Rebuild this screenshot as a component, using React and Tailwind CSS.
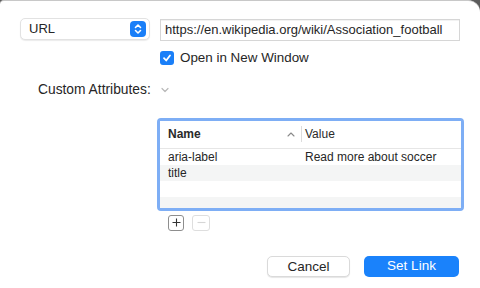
import React from "react";

function Stepper() {
  return (
    <span className="flex h-[16px] w-[16px] items-center justify-center rounded-[4px] bg-[#1a7ff8]">
      <svg width="8" height="12" viewBox="0 0 8 12" fill="none" stroke="white" strokeWidth="1.6" strokeLinecap="round" strokeLinejoin="round">
        <path d="M1.5 4.5 L4 2 L6.5 4.5" />
        <path d="M1.5 7.5 L4 10 L6.5 7.5" />
      </svg>
    </span>
  );
}

export default function App() {
  const rows = [
    { name: "aria-label", value: "Read more about soccer", bg: "bg-white" },
    { name: "title", value: "", bg: "bg-[#f4f5f5]" },
    { name: "", value: "", bg: "bg-white" },
    { name: "", value: "", bg: "bg-[#f4f5f5]" },
  ];

  return (
    <div
      className="h-[288px] w-[480px] overflow-hidden bg-[#5c5c5c] text-[13px] text-[#262626]"
      style={{ fontFamily: '"Liberation Sans", Arial, sans-serif' }}
    >
      <div className="h-full rounded-tl-[4px] rounded-tr-[12px] border-t border-[#c8c8c8] bg-white">
        {/* URL row */}
        <div className="flex items-center pl-[20px] pt-[16px]">
          <div className="flex h-[22px] w-[130px] items-center justify-between rounded-[5px] border border-[#e2e2e2] bg-white pl-[8px] pr-[3px] shadow-[0_1px_1px_rgba(0,0,0,0.08)]">
            <span>URL</span>
            <Stepper />
          </div>
          <div className="ml-[10px] mt-[2px] flex h-[22px] w-[300px] items-center border border-[#d6d6d6] bg-white pl-[4px] shadow-[inset_0_1px_0_rgba(0,0,0,0.05)]">
            <span className="whitespace-nowrap">https://en.wikipedia.org/wiki/Association_football</span>
          </div>
        </div>

        {/* checkbox */}
        <div className="mt-[7px] flex items-center pl-[160px]">
          <span className="flex h-[14px] w-[14px] items-center justify-center rounded-[3px] bg-[#1a7ff8]">
            <svg width="10" height="10" viewBox="0 0 10 10" fill="none" stroke="white" strokeWidth="1.8" strokeLinecap="round" strokeLinejoin="round">
              <path d="M2 5.2 L4.2 7.5 L8 2.5" />
            </svg>
          </span>
          <span className="ml-[6px] text-[13.4px]">Open in New Window</span>
        </div>

        {/* custom attributes */}
        <div className="mt-[12px] flex items-center">
          <span className="w-[151px] pl-[38px] text-[13.8px]">Custom Attributes:</span>
          <svg className="ml-[10px]" width="8" height="6" viewBox="0 0 8 6" fill="none" stroke="#b8b8b8" strokeWidth="1.2" strokeLinecap="round" strokeLinejoin="round">
            <path d="M1 1.5 L4 4.5 L7 1.5" />
          </svg>
        </div>

        {/* table */}
        <div className="ml-[157px] mt-[17px] w-[307px] rounded-[4px] border-[3px] border-[#7eaef5]">
          <div className="overflow-hidden bg-white">
            <div className="flex h-[28px] items-center border-b border-[#e6e6e6] text-[12px] font-bold text-[#2a2a2a]">
              <span className="flex-1 pl-[8px]">Name</span>
              <svg className="mr-[6px]" width="8" height="5" viewBox="0 0 8 5" fill="none" stroke="#8a8a8a" strokeWidth="1.1" strokeLinecap="round" strokeLinejoin="round">
                <path d="M1 4 L4 1 L7 4" />
              </svg>
              <span className="h-[16px] w-px bg-[#dcdcdc]" />
              <span className="w-[159px] pl-[3px] font-normal">Value</span>
            </div>
            {rows.map((r, i) => (
              <div key={i} className={`flex items-center ${r.bg} ${i === 3 ? "h-[11px]" : "h-[16px]"} text-[12px]`}>
                <span className="w-[145px] pl-[8px]">{r.name}</span>
                <span>{r.value}</span>
              </div>
            ))}
          </div>
        </div>

        {/* + / - */}
        <div className="ml-[168px] mt-[4px] flex gap-[8px]">
          <span className="flex h-[16px] w-[16px] items-center justify-center rounded-[3px] border border-[#8e8e8e] bg-white">
            <svg width="9" height="9" viewBox="0 0 9 9" stroke="#333" strokeWidth="1.1">
              <path d="M4.5 0.5 V8.5 M0.5 4.5 H8.5" />
            </svg>
          </span>
          <span className="flex h-[16px] w-[18px] items-center justify-center rounded-[3px] border border-[#dedede] bg-white">
            <svg width="9" height="9" viewBox="0 0 9 9" stroke="#d6d6d6" strokeWidth="1.1">
              <path d="M0.5 4.5 H8.5" />
            </svg>
          </span>
        </div>

        {/* buttons */}
        <div className="mt-[25px] flex justify-end gap-[14px] pr-[21px]">
          <button className="h-[21px] w-[83px] rounded-[5px] border border-[#dadada] bg-white text-[13.5px] text-[#262626] shadow-[0_1px_1px_rgba(0,0,0,0.1)]">
            Cancel
          </button>
          <button className="h-[21px] w-[95px] rounded-[5px] bg-[#1a82fb] text-[13.5px] text-white">
            Set Link
          </button>
        </div>
      </div>
    </div>
  );
}
